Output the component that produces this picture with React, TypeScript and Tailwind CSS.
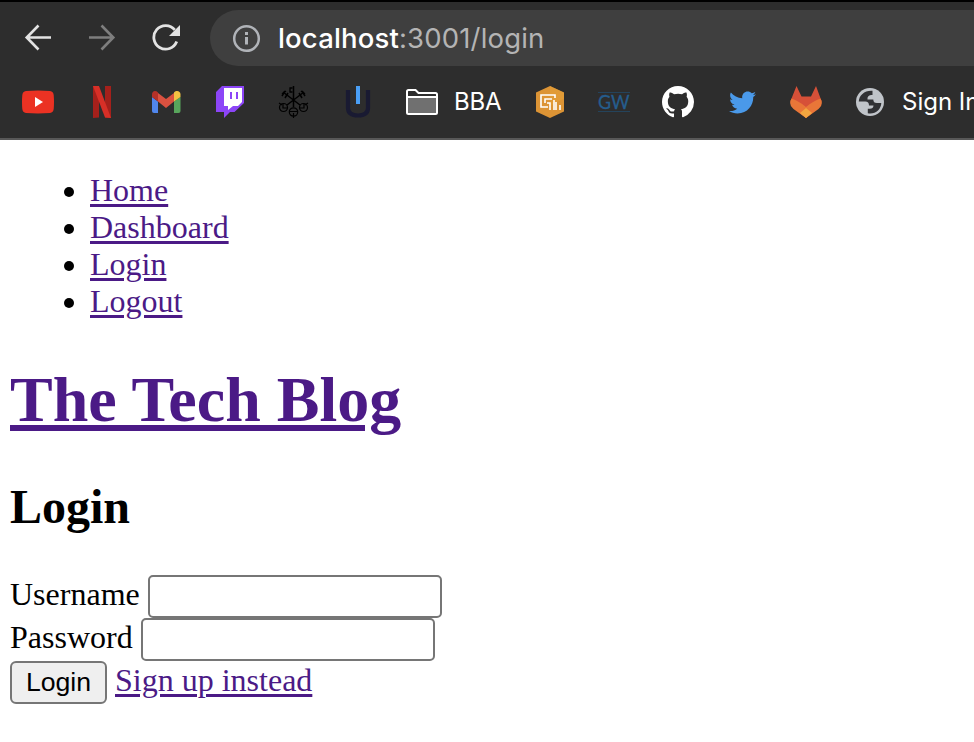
import type { ReactNode } from "react";
import { FaTwitter } from "react-icons/fa";

function Icon({ box = "0 0 32 32", children }: { box?: string; children: ReactNode }) {
  return (
    <svg viewBox={box} className="h-8 w-8 shrink-0" fill="none">
      {children}
    </svg>
  );
}

function Keys() {
  return (
    <Icon>
      <g stroke="#000" strokeWidth="1.2">
        <path d="M15.500 0V21M5 6L22 19M26 6L9 19" strokeWidth="1.500" />
        <path d="M11.500 2h3M11.500 6h3M12 1.500v5" strokeWidth="1.300" />
        <path d="M4 10l3-5M7 12l3-5M4 8l4-3M27 10l-3-5M24 12l-3-5M27 8l-4-3" strokeWidth="1.500" />
        <circle cx="5.500" cy="21.500" r="4" />
        <circle cx="25.500" cy="21.500" r="4" />
        <circle cx="15.500" cy="26" r="4.200" />
        <path d="M5 18v4h4M26 18v4h-4M12 25.500h7M15.500 27v5M1 17l3 2M30 17l-3 2" />
      </g>
    </Icon>
  );
}

function Toolbar() {
  return (
    <div className="flex h-[64px] items-start pt-2 pl-6">
      <div className="flex h-14 w-[186px] shrink-0 items-center gap-9">
        <svg viewBox="0 0 28 28" className="h-7 w-7" fill="none" stroke="#e3e3e3" strokeWidth="2.6">
          <path d="M27 13.500H3M14.500 1.500L2.700 13.500l11.800 12" />
        </svg>
        <svg viewBox="0 0 28 28" className="h-7 w-7" fill="none" stroke="#7e7e7e" strokeWidth="2.6">
          <path d="M1 13.500h24M13.500 1.500l11.800 12-11.800 12" />
        </svg>
        <svg viewBox="0 0 28 28" className="h-7 w-7" fill="none">
          <path d="M22.800 5.900A11.800 11.800 0 1 0 24.700 17.500" stroke="#e3e3e3" strokeWidth="2.8" />
          <path d="M28 1v11H17z" fill="#e3e3e3" />
        </svg>
      </div>
      <div className="flex h-14 flex-1 items-center rounded-l-full bg-[#3f3f3f] pl-[22px]">
        <svg viewBox="0 0 29 29" className="h-[29px] w-[29px] shrink-0" fill="none">
          <circle cx="14.500" cy="14.500" r="12.300" stroke="#b0b3b8" strokeWidth="2.5" />
          <path d="M13 8h3v3h-3zM13 13h3v7.500h-3z" fill="#b0b3b8" />
        </svg>
        <div className="ml-[17px] font-['Inter',sans-serif] text-[27.500px] leading-8 font-medium tracking-[0.16px] whitespace-nowrap text-white">
          localhost<span className="font-normal text-[#b4b4b4]">:3001/login</span>
        </div>
      </div>
    </div>
  );
}

function Bookmarks() {
  return (
    <div className="flex h-[72px] items-center gap-8 overflow-hidden pl-[22px] font-['Inter',sans-serif] text-[24px] whitespace-nowrap text-white">
      <Icon>
        <path d="M4 5Q16 4 28 5q3.400 .4 3.700 4 .6 7 0 14-.3 3.500-3.700 4-12 .9-24 0-3.400-.5-3.700-4-.6-7 0-14Q.6 5.400 4 5Z" fill="#eb3223" />
        <path d="M13 11v10l8-5z" fill="#fff" />
      </Icon>
      <Icon>
        <path d="M7 0h6v31.500L7 32zM19 0h6v32l-6-.5z" fill="#a5201b" />
        <path d="M7 0h6l12 32-6-.6z" fill="#d72f27" />
      </Icon>
      <Icon>
        <path d="M2 11l6 4.500V27H4q-2 0-2-2z" fill="#5086ec" />
        <path d="M24 15.500L30.500 11v14q0 2-2 2H24z" fill="#58a55c" />
        <path d="M8 7l8 6 8-6v8.500L16 22l-8-6.500z" fill="#d95140" />
        <path d="M2 11V8.500C2 5 5.500 4 8 6.500v9z" fill="#b53128" />
        <path d="M30.500 11V8.500C30.500 5 26.500 4 24 6.500v9z" fill="#f2c242" />
      </Icon>
      <Icon>
        <path d="M2 6l6-6h22v17L20.500 26H16l-6 6v-6H2z" fill="#8c45f7" />
        <path d="M10 2h18v14l-4 4h-5l-5 4v-4h-4z" fill="#fff" />
        <path d="M16 6h2v7h-2zM22 6h2v7h-2z" fill="#8c45f7" />
      </Icon>
      <Keys />
      <Icon>
        <path d="M6 4v18q0 7.500 10 7.500t10-7.500V4" stroke="#191a32" strokeWidth="4.200" />
        <path d="M14 0h4v18h-4z" fill="#4a9ff5" />
      </Icon>
      <div className="flex items-center">
        <Icon>
          <path d="M1 5.500Q1 4 2.500 4h7l3 3h17q1.500 0 1.500 1.500v18q0 1.500-1.500 1.500h-27Q1 28 1 26.500z" stroke="#fff" strokeWidth="2" />
          <path d="M2 12h28v15H2z" fill="#707070" />
          <path d="M1 11h30" stroke="#fff" strokeWidth="2" />
        </Icon>
        <span className="ml-4 w-12 tracking-[-0.2px]">BBA</span>
      </div>
      <Icon>
        <path d="M16 0l14 6.500v19L16 32 2 25.500v-19z" fill="#dc9435" />
        <path d="M16 0l14 6.500v6L16 20z" fill="#e4a038" opacity=".6" />
        <path d="M21 12V9H7v12h7M18 13h-7v4M16 24v-7h-3M20 24V14M22 16v8M26 24v-5" stroke="#fff" strokeWidth="1.600" />
      </Icon>
      <Icon>
        <path d="M0 6.500h32M0 25.500h32" stroke="#24435b" strokeWidth="1.200" />
        <text x="0" y="22.500" textLength="31.500" lengthAdjust="spacingAndGlyphs" fontFamily="Lato, sans-serif" fontSize="18.500" stroke="#255d8d" strokeWidth=".3" fill="#255d8d">GW</text>
      </Icon>
      <Icon box="0 0 16 16">
        <path fill="#fff" d="M8 0C3.580 0 0 3.580 0 8c0 3.540 2.290 6.530 5.470 7.590.4.070.55-.17.55-.38 0-.19-.01-.82-.01-1.490-2.010.37-2.530-.49-2.690-.94-.09-.23-.48-.94-.82-1.130-.28-.15-.68-.52-.01-.53.63-.01 1.080.58 1.230.82.72 1.210 1.870.87 2.330.66.07-.52.28-.87.51-1.070-1.780-.2-3.640-.89-3.640-3.950 0-.87.31-1.590.82-2.150-.08-.2-.36-1.020.08-2.120 0 0 .67-.21 2.200.82.64-.18 1.320-.27 2-.27s1.360.09 2 .27c1.530-1.040 2.200-.82 2.200-.82.44 1.100.16 1.920.08 2.120.51.56.82 1.270.82 2.150 0 3.070-1.870 3.750-3.650 3.950.29.25.54.73.54 1.480 0 1.070-.01 1.930-.01 2.200 0 .21.15.46.55.38A8.013 8.013 0 0 0 16 8c0-4.420-3.580-8-8-8z" />
      </Icon>
      <div className="flex h-8 w-8 shrink-0 items-center justify-center">
        <FaTwitter className="h-[27px] w-[27px] text-[#4a99e9]" />
      </div>
      <Icon>
        <path d="M6.500 0l5 10.500h9.500L26 0l5.500 15-2 6L16 32 2.500 21l-2-6z" fill="#d65038" />
        <path d="M1.500 12.500Q9 15 16 21q7-6 14.500-8.500 3.500 6-2 10.500L16 32 3.500 23Q-2 18.500 1.500 12.500z" fill="#e97638" />
        <path d="M10 27l6-5 6 5-6 5z" fill="#f2a640" />
      </Icon>
      <div className="flex items-center">
        <Icon>
          <circle cx="16" cy="16" r="14" fill="#c0c4c9" />
          <path d="M18.500 4.700C11 4 5 9 4.800 15.500h6.500q3.700 0 3.700 4h4.500q-.2 3.300-3.700 3.300h-2v4.500C21.500 28.500 27 23.500 27.300 17h-4.500q-3.500 0-3.500-3.500h-5.800q-.5-4 3.500-4.500h1.500z" fill="#303134" />
        </Icon>
        <span className="ml-4">Sign In</span>
      </div>
    </div>
  );
}

const link = "text-[#4b1a86] underline decoration-[3px] underline-offset-[3px]";

export default function App() {
  return (
    <div className="h-[742px] w-full overflow-hidden bg-white text-black">
      <header className="h-[140px] overflow-hidden border-t-2 border-b-2 border-t-black border-b-[#585858] bg-[#2d2d2d]">
        <Toolbar />
        <Bookmarks />
      </header>
      <main className="pl-[10px] font-['Liberation_Serif',serif] text-[32px] leading-[37px]">
        <ul className="pt-8">
          {["Home", "Dashboard", "Login", "Logout"].map((label) => (
            <li key={label} className="flex items-center">
              <span className="mt-0.5 mr-4 ml-[54px] h-[10px] w-[10px] rounded-full bg-black" />
              <a className={link}>{label}</a>
            </li>
          ))}
        </ul>
        <h1 className="mt-[43px] text-[64px] leading-[73px] font-bold">
          <a className="text-[#4b1a86] underline decoration-[6px] underline-offset-[4px]">The Tech Blog</a>
        </h1>
        <h2 className="mt-[43px] text-[48px] leading-[55px] font-bold">Login</h2>
        <form className="mt-[41px]">
          <div className="flex h-[43px] items-center">
            <label className="mr-2 pb-1">Username</label>
            <input className="h-[43px] w-[294px] rounded-[5px] border-2 border-[#767676] bg-white" />
          </div>
          <div className="flex h-[43px] items-center">
            <label className="mr-2 pb-1">Password</label>
            <input className="h-[43px] w-[294px] rounded-[5px] border-2 border-[#767676] bg-white" />
          </div>
          <div className="flex h-[43px] items-center">
            <button type="button" className="mr-2 h-[43px] w-[97px] rounded-[6px] border-2 border-[#767676] bg-[#efefef] font-['Liberation_Sans',sans-serif] text-[26.67px] leading-[31px]">
              Login
            </button>
            <span className="pb-1">
              <a className={link}>Sign up instead</a>
            </span>
          </div>
        </form>
      </main>
    </div>
  );
}
